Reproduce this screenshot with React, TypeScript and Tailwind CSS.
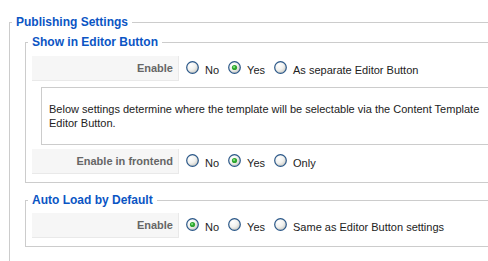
import React from 'react';

type Option = { label: string; checked?: boolean };

const Radio: React.FC<{ checked?: boolean }> = ({ checked }) => (
  <svg width="13" height="13" viewBox="0 0 13 13" className="shrink-0">
    <defs>
      <radialGradient id={checked ? 'rgOn' : 'rgOff'} cx="0.35" cy="0.3" r="0.75">
        <stop offset="0" stopColor="#ffffff" />
        <stop offset="0.55" stopColor="#f1f1ee" />
        <stop offset="1" stopColor="#c9c9c2" />
      </radialGradient>
    </defs>
    <circle cx="6.5" cy="6.5" r="5.8" fill={`url(#${checked ? 'rgOn' : 'rgOff'})`} stroke="#2a5788" strokeWidth="1.2" />
    {checked && (
      <>
        <circle cx="6.5" cy="6.5" r="2.6" fill="#2ea62e" />
        <circle cx="6.1" cy="6.1" r="1.1" fill="#7ee07e" />
      </>
    )}
  </svg>
);

const Row: React.FC<{ label: string; options: Option[]; className?: string }> = ({ label, options, className }) => (
  <div className={`flex ml-[6px] ${className ?? ''}`}>
    <div className="w-[147px] h-[25px] bg-[#f6f6f6] border-r border-b border-[#e9e9e9] text-right pr-[5px] pt-[5px] font-bold text-[#666]">
      {label}
    </div>
    <div className="flex items-center ml-[7px] gap-[9px]">
      {options.map((o) => (
        <label key={o.label} className="flex items-center gap-[6px] text-[#222]">
          <span className="-mt-[3px]"><Radio checked={o.checked} /></span>
          <span className="pt-[2px]">{o.label}</span>
        </label>
      ))}
    </div>
  </div>
);

const Legend: React.FC<{ children: React.ReactNode }> = ({ children }) => (
  <legend className="ml-[2px] px-[4px] text-[12px] leading-[16px] font-bold text-[#0b55c4]">{children}</legend>
);

export default function App() {
  return (
    <div className="w-[488px] h-[261px] overflow-hidden bg-white pt-[14px] pl-[9px] font-['Liberation_Sans',Arial,sans-serif] text-[11px] leading-[14px]">
      <fieldset className="border border-[#ccc] w-[560px] pb-[40px]">
        <Legend>Publishing Settings</Legend>

        <fieldset className="border border-[#ccc] ml-[15px] mt-[4px] w-[520px] pb-[8px]">
          <Legend>Show in Editor Button</Legend>
          <Row
            className="mt-[6px]"
            label="Enable"
            options={[{ label: 'No' }, { label: 'Yes', checked: true }, { label: 'As separate Editor Button' }]}
          />
          <div className="ml-[15px] mt-[6px] w-[490px] h-[58px] border border-[#ccc] pl-[7px] pt-[14px] text-[#222]">
            <p className="w-[438px]">
              Below settings determine where the template will be selectable via the Content Template Editor Button.
            </p>
          </div>
          <Row
            className="mt-[4px]"
            label="Enable in frontend"
            options={[{ label: 'No' }, { label: 'Yes', checked: true }, { label: 'Only' }]}
          />
        </fieldset>

        <fieldset className="border border-[#ccc] ml-[15px] mt-[9px] w-[520px] pb-[8px]">
          <Legend>Auto Load by Default</Legend>
          <Row
            className="mt-[5px]"
            label="Enable"
            options={[{ label: 'No', checked: true }, { label: 'Yes' }, { label: 'Same as Editor Button settings' }]}
          />
        </fieldset>
      </fieldset>
    </div>
  );
}
